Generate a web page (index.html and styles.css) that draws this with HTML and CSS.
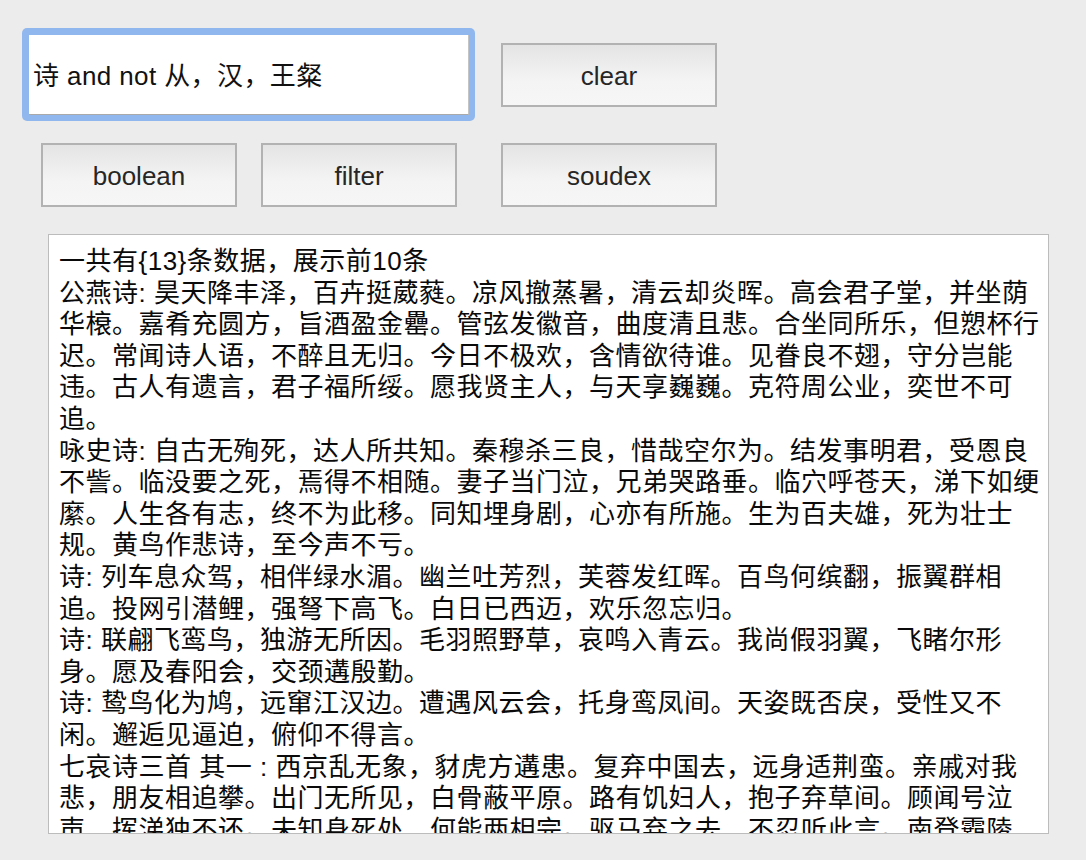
FILE: index.html
```html
<!DOCTYPE html>
<html lang="zh">
<head>
<meta charset="utf-8">
<title>诗词检索</title>
<link rel="stylesheet" href="styles.css">
</head>
<body>
<div class="app">
  <div class="row row-top">
    <div class="entry-ring">
      <div class="entry">诗 and not 从，汉，王粲</div>
    </div>
    <div class="btn btn-wide btn-clear">clear</div>
  </div>
  <div class="row row-buttons">
    <div class="btn">boolean</div>
    <div class="btn btn-filter">filter</div>
    <div class="btn btn-wide btn-soudex">soudex</div>
  </div>
  <div class="results">
    <div class="line">一共有{13}条数据，展示前10条</div>
    <div class="line">公燕诗: 昊天降丰泽，百卉挺葳蕤。凉风撤蒸暑，清云却炎晖。高会君子堂，并坐荫</div>
    <div class="line">华榱。嘉肴充圆方，旨酒盈金罍。管弦发徽音，曲度清且悲。合坐同所乐，但愬杯行</div>
    <div class="line">迟。常闻诗人语，不醉且无归。今日不极欢，含情欲待谁。见眷良不翅，守分岂能</div>
    <div class="line">违。古人有遗言，君子福所绥。愿我贤主人，与天享巍巍。克符周公业，奕世不可</div>
    <div class="line">追。</div>
    <div class="line">咏史诗: 自古无殉死，达人所共知。秦穆杀三良，惜哉空尔为。结发事明君，受恩良</div>
    <div class="line">不訾。临没要之死，焉得不相随。妻子当门泣，兄弟哭路垂。临穴呼苍天，涕下如绠</div>
    <div class="line">縻。人生各有志，终不为此移。同知埋身剧，心亦有所施。生为百夫雄，死为壮士</div>
    <div class="line">规。黄鸟作悲诗，至今声不亏。</div>
    <div class="line">诗: 列车息众驾，相伴绿水湄。幽兰吐芳烈，芙蓉发红晖。百鸟何缤翻，振翼群相</div>
    <div class="line">追。投网引潜鲤，强弩下高飞。白日已西迈，欢乐忽忘归。</div>
    <div class="line">诗: 联翩飞鸾鸟，独游无所因。毛羽照野草，哀鸣入青云。我尚假羽翼，飞睹尔形</div>
    <div class="line">身。愿及春阳会，交颈遘殷勤。</div>
    <div class="line">诗: 鸷鸟化为鸠，远窜江汉边。遭遇风云会，托身鸾凤间。天姿既否戾，受性又不</div>
    <div class="line">闲。邂逅见逼迫，俯仰不得言。</div>
    <div class="line">七哀诗三首 其一 : 西京乱无象，豺虎方遘患。复弃中国去，远身适荆蛮。亲戚对我</div>
    <div class="line">悲，朋友相追攀。出门无所见，白骨蔽平原。路有饥妇人，抱子弃草间。顾闻号泣</div>
    <div class="line">声，挥涕独不还。未知身死处，何能两相完。驱马弃之去，不忍听此言。南登霸陵</div>
  </div>
</div>
</body>
</html>
```

FILE: styles.css
```css
html, body {
  margin: 0;
  padding: 0;
  background: #ececec;
}

body {
  font-family: "Liberation Sans", "Noto Sans CJK SC", sans-serif;
  font-size: 26px;
  color: #111;
  width: 1086px;
  height: 860px;
  overflow: hidden;
}

.app {
  display: flex;
  flex-direction: column;
}

.row {
  display: flex;
  align-items: flex-start;
}

.row-top {
  padding-top: 28px;
  padding-left: 22px;
}

.entry-ring {
  width: 453px;
  height: 93px;
  box-sizing: border-box;
  padding: 7px 6px 6px 7px;
  background: #90b8ee;
  border-radius: 5px;
}

.entry {
  box-sizing: border-box;
  height: 100%;
  background: #fff;
  border-right: 1px solid #c4c4c4;
  border-bottom: 1px solid #a9a9a9;
  display: flex;
  align-items: center;
  padding-left: 4px;
  padding-bottom: 3px;
  color: #111;
  white-space: nowrap;
  letter-spacing: 0.4px;
}

.btn {
  box-sizing: border-box;
  width: 196px;
  height: 64px;
  border: 2px solid #b2b2b2;
  background: linear-gradient(#e4e4e4, #f4f4f4 60%, #f6f6f6);
  display: flex;
  align-items: center;
  justify-content: center;
  color: #262626;
  padding-top: 3px;
}

.btn-wide {
  width: 216px;
}

.btn-clear {
  margin-left: 26px;
  margin-top: 15px;
}

.row-buttons {
  margin-top: 22px;
  padding-left: 41px;
}

.btn-filter {
  margin-left: 24px;
}

.btn-soudex {
  margin-left: 44px;
}

.results {
  box-sizing: border-box;
  margin-top: 27px;
  margin-left: 48px;
  width: 1001px;
  height: 600px;
  background: #fff;
  border: 1px solid #bcbcbc;
  padding: 11px 0 0 10px;
  overflow: hidden;
  line-height: 31.6px;
  color: #0a0a0a;
  letter-spacing: 0.5px;
}

.line {
  white-space: nowrap;
  height: 31.6px;
}
```
